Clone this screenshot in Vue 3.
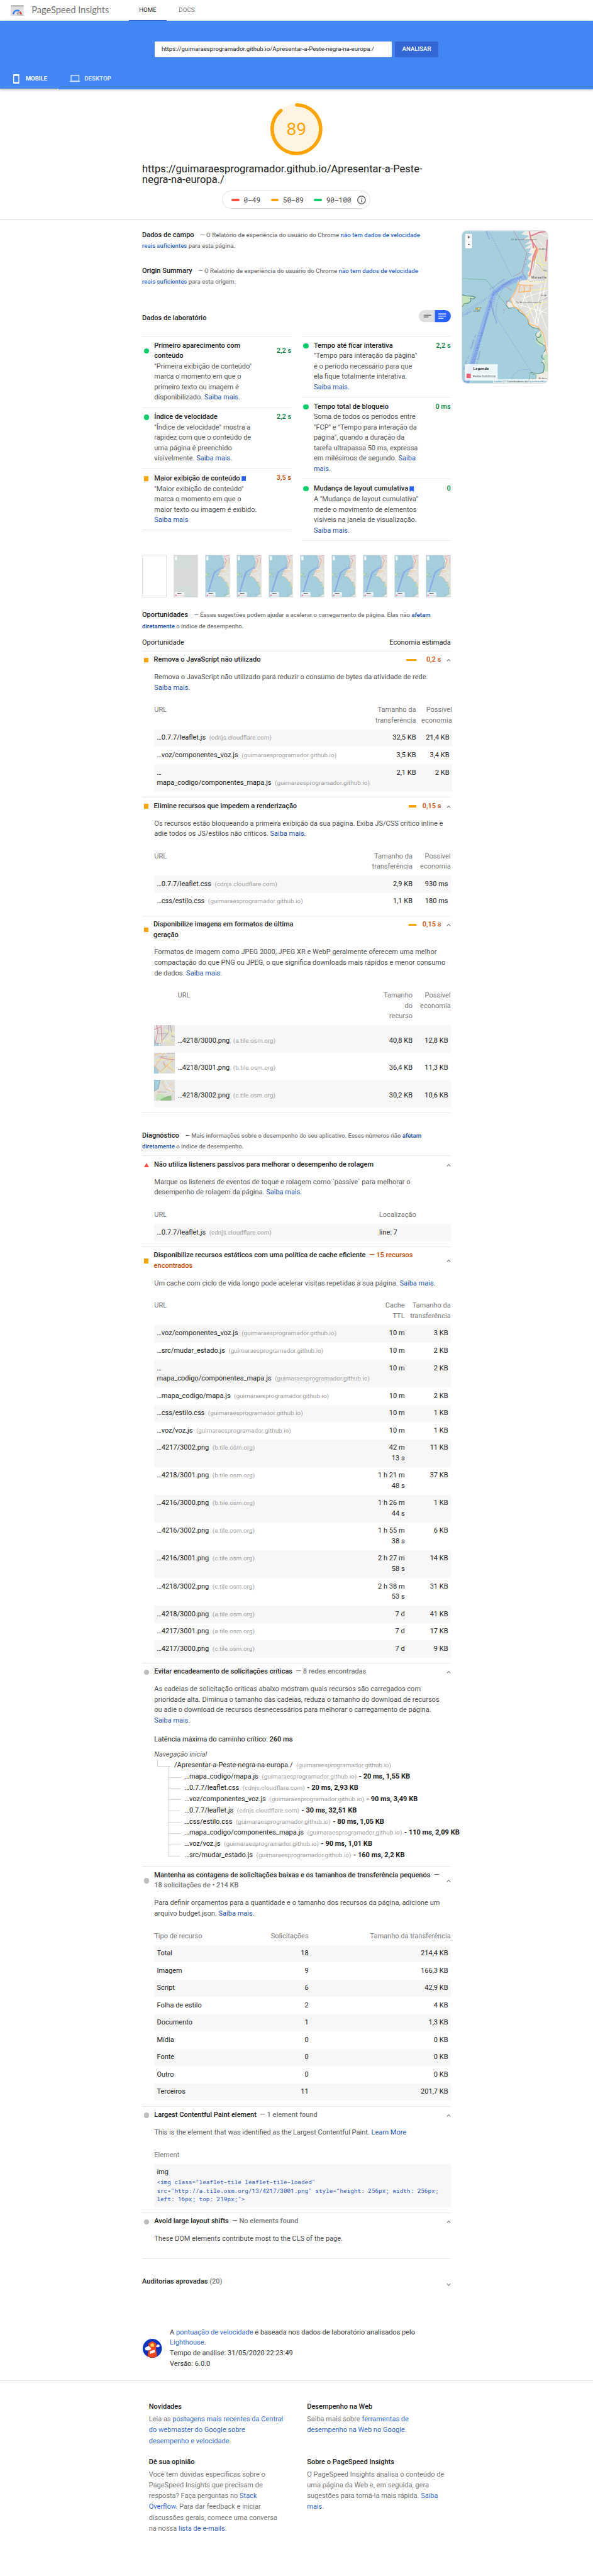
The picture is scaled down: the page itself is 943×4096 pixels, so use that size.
<script setup>
const gh = 'guimaraesprogramador.github.io'
const cdn = 'cdnjs.cloudflare.com'

const unusedJs = [
  { url: '…0.7.7/leaflet.js', host: cdn, size: '32,5 KB', save: '21,4 KB' },
  { url: '…voz/componentes_voz.js', host: gh, size: '3,5 KB', save: '3,4 KB' },
  { pre: '…', url: 'mapa_codigo/componentes_mapa.js', host: gh, size: '2,1 KB', save: '2 KB' },
]
const blocking = [
  { url: '…0.7.7/leaflet.css', host: cdn, size: '2,9 KB', save: '930 ms' },
  { url: '…css/estilo.css', host: gh, size: '1,1 KB', save: '180 ms' },
]
const images = [
  { url: '…4218/3000.png', host: 'a.tile.osm.org', size: '40,8 KB', save: '12,8 KB', tile: 'tile-a' },
  { url: '…4218/3001.png', host: 'b.tile.osm.org', size: '36,4 KB', save: '11,3 KB', tile: 'tile-b' },
  { url: '…4218/3002.png', host: 'c.tile.osm.org', size: '30,2 KB', save: '10,6 KB', tile: 'tile-c' },
]
const cache = [
  { url: '…voz/componentes_voz.js', host: gh, ttl: ['10 m'], size: '3 KB' },
  { url: '…src/mudar_estado.js', host: gh, ttl: ['10 m'], size: '2 KB' },
  { pre: '…', url: 'mapa_codigo/componentes_mapa.js', host: gh, ttl: ['10 m'], size: '2 KB' },
  { url: '…mapa_codigo/mapa.js', host: gh, ttl: ['10 m'], size: '2 KB' },
  { url: '…css/estilo.css', host: gh, ttl: ['10 m'], size: '1 KB' },
  { url: '…voz/voz.js', host: gh, ttl: ['10 m'], size: '1 KB' },
  { url: '…4217/3002.png', host: 'b.tile.osm.org', ttl: ['42 m', '13 s'], size: '11 KB' },
  { url: '…4218/3001.png', host: 'b.tile.osm.org', ttl: ['1 h 21 m', '48 s'], size: '37 KB' },
  { url: '…4216/3000.png', host: 'b.tile.osm.org', ttl: ['1 h 26 m', '44 s'], size: '1 KB' },
  { url: '…4216/3002.png', host: 'a.tile.osm.org', ttl: ['1 h 55 m', '38 s'], size: '6 KB' },
  { url: '…4216/3001.png', host: 'c.tile.osm.org', ttl: ['2 h 27 m', '58 s'], size: '14 KB' },
  { url: '…4218/3002.png', host: 'c.tile.osm.org', ttl: ['2 h 38 m', '53 s'], size: '31 KB' },
  { url: '…4218/3000.png', host: 'a.tile.osm.org', ttl: ['7 d'], size: '41 KB' },
  { url: '…4217/3001.png', host: 'a.tile.osm.org', ttl: ['7 d'], size: '17 KB' },
  { url: '…4217/3000.png', host: 'c.tile.osm.org', ttl: ['7 d'], size: '9 KB' },
]
const chain = [
  { url: '…mapa_codigo/mapa.js', host: gh, info: '20 ms, 1,55 KB' },
  { url: '…0.7.7/leaflet.css', host: cdn, info: '20 ms, 2,93 KB' },
  { url: '…voz/componentes_voz.js', host: gh, info: '90 ms, 3,49 KB' },
  { url: '…0.7.7/leaflet.js', host: cdn, info: '30 ms, 32,51 KB' },
  { url: '…css/estilo.css', host: gh, info: '80 ms, 1,05 KB' },
  { url: '…mapa_codigo/componentes_mapa.js', host: gh, info: '110 ms, 2,09 KB' },
  { url: '…voz/voz.js', host: gh, info: '90 ms, 1,01 KB' },
  { url: '…src/mudar_estado.js', host: gh, info: '160 ms, 2,2 KB' },
]
const resources = [
  ['Total', '18', '214,4 KB'],
  ['Imagem', '9', '166,3 KB'],
  ['Script', '6', '42,9 KB'],
  ['Folha de estilo', '2', '4 KB'],
  ['Documento', '1', '1,3 KB'],
  ['Mídia', '0', '0 KB'],
  ['Fonte', '0', '0 KB'],
  ['Outro', '0', '0 KB'],
  ['Terceiros', '11', '201,7 KB'],
]
</script>

<template>
  <div class="page">
    <svg class="defs" width="0" height="0" aria-hidden="true">
      <symbol id="map" viewBox="30 30 595 1056" preserveAspectRatio="none">
        <rect x="30" y="30" width="595" height="1056" fill="#a6cfde" />
        <path d="M625 30H500L466 32 440 54 498 64 470 80 446 92 508 92 462 124 512 118 458 154 508 150 486 178 514 190 484 222 510 240 482 270 504 294 484 322 492 346 480 368 455 372 430 365 412 378 420 400 400 440 375 480 362 500 380 535 352 520 332 540 350 565 378 568 405 560 425 590 455 610 485 640 492 680 520 700 555 705 575 722 545 740 540 765 560 790 550 810 590 815 615 850 590 890 600 915 580 940 600 970 595 1010 555 1020 510 1010 495 1045 488 1086H625Z" fill="#efece6" />
        <path d="M510 60L540 110 545 260 515 350 560 370 600 380 560 400 420 405 380 490 430 570 500 660 560 700 600 760 620 830 625 830V30H570Z" fill="#e1dfdc" />
        <path d="M540 800L575 720 600 800 585 835ZM596 890L625 880V1010L600 1000ZM415 560L440 575 425 592ZM30 480L70 476 120 486 105 500 84 496 90 514 78 530 30 552Z" fill="#c4e3bd" />
        <path d="M332 540L352 566 405 560 425 590 455 610 485 640 492 680 520 700 555 705 575 722M545 735c-20 40 35 45 30 10M545 770c0 40 50 40 60 60s0 30-10 40M590 890c-25 10 0 30 10 30M575 940c30 0 25 40 18 70l-40 12-45-12-22 76M30 472l22 8 40 2 30 6-14 14-22-4 4 18-20 14-26 6-14 18" fill="none" stroke="#5e8f80" stroke-width="5" />
        <path d="M122 562l40-2-14 20-26-4z" fill="#cfd8a0" stroke="#5e8f80" stroke-width="3" /><circle cx="134" cy="569" r="6" fill="#e08a3c" />
        <path d="M498 1014l46 14-4 30-44-6z" fill="#a6cfde" stroke="#7cb8a4" stroke-width="4" />
        <path d="M520 60v110M540 40l80 30M560 100l60 60M540 260l85 60M580 400l-50 290M610 380l-60 320M440 500l185-60M420 540l200 60M470 600l150-120M500 440l60 230M450 460l100 230M540 620l85-60M480 430l-40 130M560 560l60 160" fill="none" stroke="#fff" stroke-width="4" />
        <path d="M530 250l90 20M515 230l-20 120M550 160l40 150M570 150l30 90 25 5M430 455l195-28M470 380l140 5V310M625 520l-90 20-60 90M515 60l30 190" fill="none" stroke="#f3f0a2" stroke-width="6" />
        <path d="M410 400l35 5 80 5M430 405l-8 50 80-8V400M460 405v45M385 480l-20 20 20 50 60 40 45 55 5 30 60 20 35 45 15 60 10 80M430 370l-28 70-20 40" fill="none" stroke="#f5bd7d" stroke-width="7" />
        <path d="M495 30l12 60 40 60-25 60-22 130M620 90l-10 150M505 65l60-25 60-8M515 90l10 60" fill="none" stroke="#e08395" stroke-width="9" />
        <path d="M540 140l12 20-30 80M500 320l-5 25" fill="none" stroke="#f49b80" stroke-width="12" />
        <path d="M386 30L478 184 446 312 396 340M446 312l30 60M328 413l46 30M340 540l-4-25 12 5 18-28M315 570l8 8-5 8M310 600l8-6" fill="none" stroke="#b98ba4" stroke-width="4" />
        <path d="M30 362l166 6 136 172" fill="none" stroke="#79b5a6" stroke-width="4" />
        <path d="M470 350C390 370 310 405 255 455 200 590 150 760 60 1086" fill="none" stroke="#7e9bef" stroke-width="34" stroke-dasharray="5 3" opacity=".7" />
        <path d="M250 455C200 600 170 760 70 1086M230 520C180 690 130 880 40 1086M440 350C360 370 310 400 240 480" fill="none" stroke="#5f80ec" stroke-width="12" stroke-dasharray="6 5" opacity=".6" />
        <path d="M215 32L372 342 400 345M444 350L500 150 508 140M470 345l30 35 105-12M290 430c-45 90-55 160-40 190M320 410c-40 90-80 160-40 240L505 1000M30 600l150-95 190-140M60 595l250-170M360 1080c30-80 80-100 140-85" fill="none" stroke="#6d8de6" stroke-width="2.5" stroke-dasharray="9 6" />
        <path d="M540 200l-20 100M545 250l50 55 30 10M560 520l65-30" fill="none" stroke="#777" stroke-width="2" />
      </symbol>
      <symbol id="overlay" viewBox="30 30 595 1056" preserveAspectRatio="none">
        <rect x="49" y="49" width="50" height="102" rx="6" fill="#fff" />
        <path d="M70 72h10M75 67v10M70 122h10" stroke="#444" stroke-width="4" />
        <rect x="49" y="954" width="227" height="114" fill="#fff" fill-opacity=".8" />
        <rect x="60" y="1020" width="30" height="30" fill="#ee6172" />
        <path d="M107 986h106" stroke="#444" stroke-width="16" stroke-dasharray="14 4" />
        <path d="M103 1036h158" stroke="#e99" stroke-width="12" stroke-dasharray="10 4" />
        <path d="M250 1072h370" stroke="#9cd" stroke-width="12" stroke-dasharray="16 5" />
      </symbol>
      <symbol id="tile-a" viewBox="0 0 48 48">
        <path d="M0 0h48v48H0z" fill="#dedcd9" /><path d="M0 28l5 20H0zM8 44l14 4H0z" fill="#a6cfde" />
        <path d="M3 0l4 38M15 0l3 14-6 34M0 8l20-4M30 34l18-6M20 40L44 20M24 10l24 8" fill="none" stroke="#fff" />
        <path d="M5 0l4 12-6 30M16 0l2 40M0 10l16-6" fill="none" stroke="#dc8797" stroke-width="1.6" />
        <path d="M34 0v16L18 36M38 0l3 26 7 2" fill="none" stroke="#888" stroke-width="1" />
        <path d="M12 38l14-4 22 8M24 12l24 10M44 8L30 48" fill="none" stroke="#eeea9a" stroke-width="1.5" />
        <path d="M10 20h20M4 43h12" stroke="#777" stroke-dasharray="2 1" />
      </symbol>
      <symbol id="tile-b" viewBox="0 0 48 48">
        <path d="M0 0h48v48H0z" fill="#dedcd8" /><path d="M0 28l10 12v8H0z" fill="#a6cfde" />
        <path d="M0 6l18-6M0 28l14 16 30-28M4 30l20-30M20 24l28 20" fill="none" stroke="#f3bf88" stroke-width="1.6" />
        <path d="M16 48l20-20 4-28M0 18l48-6M30 20l18 26" fill="none" stroke="#eeea9a" stroke-width="1.6" />
        <path d="M14 10l16 4 18 2" fill="none" stroke="#dc8797" stroke-width="1.5" /><path d="M22 20l4 14M10 9h20M30 1h18" stroke="#888" stroke-dasharray="2 1" />
      </symbol>
      <symbol id="tile-c" viewBox="0 0 48 48">
        <path d="M0 0h48v48H0z" fill="#e0dfd9" /><path d="M0 0h14l-4 20-10 6z" fill="#a6cfde" stroke="#5e8f80" stroke-width=".8" />
        <path d="M6 34l12-2 10 6-4 10H4zM18 2h8l-4 5z" fill="#c4e3bd" /><path d="M16 44l14-6 10-2v12H14z" fill="#8fbd83" />
        <path d="M18 4l10 18 20 6M30 20L44 6M14 26l-6 10" fill="none" stroke="#f3c38c" stroke-width="1.4" /><path d="M28 16l12 8M24 0l18 30" fill="none" stroke="#fff" /><path d="M8 28h20" stroke="#777" stroke-dasharray="2 1" />
      </symbol>
      <symbol id="chevron" viewBox="0 0 10 8"><path d="M1 6.5l4-4.3 4 4.3" fill="none" stroke="#757575" stroke-width="1.5" /></symbol>
      <symbol id="bookmark" viewBox="0 0 11 13"><path d="M.3 1.3C.3.5.7.2 1.4.2h8.2c.7 0 1.1.3 1.1 1.1v11.5L5.5 10.600 .3 12.800z" fill="#2962ff" /></symbol>
    </svg>

    <header class="top">
      <svg class="logo" width="30" height="26" viewBox="0 0 30 26">
        <rect width="30" height="26" rx="1.5" fill="#e0e0e0" /><path d="M0 4V1.500Q0 0 1.500 0h27Q30 0 30 1.500V4z" fill="#bdbdbd" />
        <circle cx="2.700" cy="2.200" r=".7" fill="#fff" /><circle cx="5.500" cy="2.200" r=".7" fill="#fff" />
        <path d="M16 21l5-6 9 9v2H19z" fill="#c6c6c6" />
        <path d="M6 21.500a9 9 0 0 1 14-7.400" fill="none" stroke="#4285f4" stroke-width="4" />
        <path d="M21 15.600a8 8 0 0 1 3 5.900" fill="none" stroke="#db4437" stroke-width="4" />
        <path d="M20.500 12.500l-3 8.500a2 2 0 0 1-3.500-2z" fill="#9e9e9e" />
      </svg>
      <span class="brand">PageSpeed Insights</span>
      <nav class="nav"><a class="on">HOME</a><a>DOCS</a></nav>
    </header>

    <section class="hero">
      <div class="search">
        <div class="field">https://guimaraesprogramador.github.io/Apresentar-a-Peste-negra-na-europa./</div>
        <button class="go">ANALISAR</button>
      </div>
      <div class="devices">
        <span class="dev on">
          <svg class="i-mob" width="14" height="22" viewBox="0 0 14 22"><path fill="#fff" fill-rule="evenodd" d="M1.500 0h11Q14 0 14 1.500v19Q14 22 12.500 22h-11Q0 22 0 20.500v-19Q0 0 1.500 0zM2 4v14h10V4z" /></svg>MOBILE
        </span>
        <span class="dev">
          <svg class="i-desk" width="24" height="17" viewBox="0 0 24 17"><path fill="#fff" fill-rule="evenodd" d="M3.500 0h17Q22 0 22 1.500V14h2v2.500H0V14h2V1.500Q2 0 3.500 0zM4 2v11.500h16V2z" /></svg>DESKTOP
        </span>
      </div>
    </section>

    <section class="score">
      <div class="gauge">
        <svg width="120" height="120" viewBox="0 0 120 120">
          <circle cx="60" cy="60" r="58" fill="#fff4e2" />
          <circle class="arc" cx="60" cy="60" r="56" pathLength="1000" />
        </svg>
        <span>89</span>
      </div>
      <h1>https://guimaraesprogramador.github.io/Apresentar-a-Peste-<br />negra-na-europa./</h1>
      <div class="scale">
        <i class="red"></i><span>0–49</span><i class="amber"></i><span>50–89</span><i class="green"></i><span class="last">90–100</span>
        <svg width="20" height="20" viewBox="0 0 20 20"><circle cx="10" cy="10" r="9" fill="none" stroke="#616161" stroke-width="2" /><path d="M10 5v2M10 9v6" stroke="#616161" stroke-width="2" /></svg>
      </div>
    </section>

    <div class="report">
      <main class="main">
        <p class="lead field-data"><b>Dados de campo</b><span>— O Relatório de experiência do usuário do Chrome <a>não tem dados de velocidade<br />reais suficientes</a> para esta página.</span></p>
        <p class="lead origin"><b>Origin Summary</b><span>— O Relatório de experiência do usuário do Chrome <a>não tem dados de velocidade<br />reais suficientes</a> para esta origem.</span></p>
        <div class="lab-head">
          <b>Dados de laboratório</b>
          <svg width="74" height="28" viewBox="0 0 74 28"><path d="M37 0H14a14 14 0 0 0 0 28h23z" fill="#e0e0e0" /><path d="M37 0h23a14 14 0 0 1 0 28H37z" fill="#2962ff" /><path d="M11.500 12h17M11.500 16h10.500" stroke="#757575" stroke-width="2" /><path d="M45 9h18M45 14h18M45 19h12" stroke="#fff" stroke-width="2" /></svg>
        </div>
        <div class="metrics">
          <div class="mcol">
            <article class="metric">
              <i class="dot green tall"></i>
              <div><h3>Primeiro aparecimento com<br />conteúdo</h3><p>"Primeira exibição de conteúdo"<br />marca o momento em que o<br />primeiro texto ou imagem é<br />disponibilizado. <a>Saiba mais</a>.</p></div><em class="mid">2,2 s</em>
            </article>
            <article class="metric">
              <i class="dot green"></i>
              <div><h3>Índice de velocidade</h3><p>"Índice de velocidade" mostra a<br />rapidez com que o conteúdo de<br />uma página é preenchido<br />visivelmente. <a>Saiba mais</a>.</p></div><em>2,2 s</em>
            </article>
            <article class="metric end">
              <i class="sq"></i>
              <div><h3 class="mark">Maior exibição de conteúdo<svg width="11" height="13"><use href="#bookmark" /></svg></h3><p>"Maior exibição de conteúdo"<br />marca o momento em que o<br />maior texto ou imagem é exibido.<br /><a>Saiba mais</a></p></div><em class="warn">3,5 s</em>
            </article>
          </div>
          <div class="mcol">
            <article class="metric">
              <i class="dot green"></i>
              <div><h3>Tempo até ficar interativa</h3><p>"Tempo para interação da página"<br />é o período necessário para que<br />ela fique totalmente interativa.<br /><a>Saiba mais</a>.</p></div><em>2,2 s</em>
            </article>
            <article class="metric">
              <i class="dot green"></i>
              <div><h3>Tempo total de bloqueio</h3><p>Soma de todos os períodos entre<br />"FCP" e "Tempo para interação da<br />página", quando a duração da<br />tarefa ultrapassa 50 ms, expressa<br />em milésimos de segundo. <a>Saiba<br />mais</a>.</p></div><em>0 ms</em>
            </article>
            <article class="metric end">
              <i class="dot green"></i>
              <div><h3 class="mark">Mudança de layout cumulativa<svg width="11" height="13"><use href="#bookmark" /></svg></h3><p>A "Mudança de layout cumulativa"<br />mede o movimento de elementos<br />visíveis na janela de visualização.<br /><a>Saiba mais</a>.</p></div><em>0</em>
            </article>
          </div>
        </div>

        <div class="film">
          <div v-for="n in 10" :key="n" class="frame">
            <svg v-if="n > 1" width="55" height="97">
              <rect v-if="n === 2" width="55" height="97" fill="#dadada" />
              <path v-if="n === 2" d="M0 0h41v30q-20 5-41 2zM4 73h37v24H4z" fill="#d3dbdb" />
              <use v-else href="#map" width="55" height="97" />
              <use href="#overlay" width="55" height="97" />
            </svg>
          </div>
        </div>

        <section class="opps">
          <p class="lead"><b>Oportunidades</b><span>— Essas sugestões podem ajudar a acelerar o carregamento de página. Elas não <a class="dk">afetam<br />diretamente</a> o índice de desempenho.</span></p>
          <div class="cols"><span>Oportunidade</span><span>Economia estimada</span></div>

          <article class="audit first">
            <header><i class="sq"></i><h3 class="o">Remova o JavaScript não utilizado</h3><u class="bar b23"></u><em class="warn">0,2 s</em><svg class="chev" width="10" height="8"><use href="#chevron" /></svg></header>
            <p>Remova o JavaScript não utilizado para reduzir o consumo de bytes da atividade de rede.<br /><a>Saiba mais</a>.</p>
            <div class="table wide">
              <div class="tr th"><span class="c1">URL</span><span class="c2">Tamanho da<br />transferência</span><span class="c3">Possível<br />economia</span></div>
              <div v-for="r in unusedJs" :key="r.url" class="tr td"><span class="c1"><template v-if="r.pre">{{ r.pre }}<br /></template>{{ r.url }}<small>({{ r.host }})</small></span><span class="c2">{{ r.size }}</span><span class="c3">{{ r.save }}</span></div>
            </div>
          </article>

          <article class="audit second">
            <header><i class="sq"></i><h3 class="o">Elimine recursos que impedem a renderização</h3><u class="bar b17"></u><em class="warn">0,15 s</em><svg class="chev" width="10" height="8"><use href="#chevron" /></svg></header>
            <p>Os recursos estão bloqueando a primeira exibição da sua página. Exiba JS/CSS crítico inline e<br />adie todos os JS/estilos não críticos. <a>Saiba mais</a>.</p>
            <div class="table">
              <div class="tr th"><span class="c1">URL</span><span class="c2">Tamanho da<br />transferência</span><span class="c3">Possível<br />economia</span></div>
              <div v-for="r in blocking" :key="r.url" class="tr td"><span class="c1">{{ r.url }}<small>({{ r.host }})</small></span><span class="c2">{{ r.size }}</span><span class="c3">{{ r.save }}</span></div>
            </div>
          </article>

          <article class="audit third">
            <header class="top-aligned"><i class="sq small"></i><h3 class="o">Disponibilize imagens em formatos de última<br />geração</h3><u class="bar b17"></u><em class="warn">0,15 s</em><svg class="chev" width="10" height="8"><use href="#chevron" /></svg></header>
            <p>Formatos de imagem como JPEG 2000, JPEG XR e WebP geralmente oferecem uma melhor<br />compactação do que PNG ou JPEG, o que significa downloads mais rápidos e menor consumo<br />de dados. <a>Saiba mais</a>.</p>
            <div class="table imgs">
              <div class="tr th"><span class="c1">URL</span><span class="c2">Tamanho<br />do<br />recurso</span><span class="c3">Possível<br />economia</span></div>
              <div v-for="r in images" :key="r.url" class="tr td"><svg width="48" height="48"><use :href="'#' + r.tile" /></svg><span class="c1">{{ r.url }}<small>({{ r.host }})</small></span><span class="c2">{{ r.size }}</span><span class="c3">{{ r.save }}</span></div>
            </div>
          </article>
        </section>

        <section class="diag">
          <p class="lead"><b>Diagnóstico</b><span>— Mais informações sobre o desempenho do seu aplicativo. Esses números não <a class="dk">afetam<br />diretamente</a> o índice de desempenho.</span></p>

          <article class="audit listeners">
            <header><i class="tri"></i><h3>Não utiliza listeners passivos para melhorar o desempenho de rolagem</h3><svg class="chev" width="10" height="8"><use href="#chevron" /></svg></header>
            <p>Marque os listeners de eventos de toque e rolagem como `passive` para melhorar o<br />desempenho de rolagem da página. <a>Saiba mais</a>.</p>
            <div class="table loc">
              <div class="tr th"><span class="c1">URL</span><span class="c2">Localização</span></div>
              <div class="tr td"><span class="c1">…0.7.7/leaflet.js<small>({{ cdn }})</small></span><span class="c2">line: 7</span></div>
            </div>
          </article>

          <article class="audit cache">
            <header><i class="sq"></i><h3 class="o">Disponibilize recursos estáticos com uma política de cache eficiente <q class="warn">— 15 recursos<br />encontrados</q></h3><svg class="chev" width="10" height="8"><use href="#chevron" /></svg></header>
            <p>Um cache com ciclo de vida longo pode acelerar visitas repetidas à sua página. <a>Saiba mais</a>.</p>
            <div class="table ttl">
              <div class="tr th"><span class="c1">URL</span><span class="c2">Cache<br />TTL</span><span class="c3">Tamanho da<br />transferência</span></div>
              <div v-for="r in cache" :key="r.url" class="tr td"><span class="c1"><template v-if="r.pre">{{ r.pre }}<br /></template>{{ r.url }}<small>({{ r.host }})</small></span><span class="c2"><template v-for="(t, i) in r.ttl" :key="t"><br v-if="i" />{{ t }}</template></span><span class="c3">{{ r.size }}</span></div>
            </div>
          </article>

          <article class="audit chains">
            <header><i class="dot"></i><h3>Evitar encadeamento de solicitações críticas <q>— 8 redes encontradas</q></h3><svg class="chev" width="10" height="8"><use href="#chevron" /></svg></header>
            <p>As cadeias de solicitação críticas abaixo mostram quais recursos são carregados com<br />prioridade alta. Diminua o tamanho das cadeias, reduza o tamanho do download de recursos<br />ou adie o download de recursos desnecessários para melhorar o carregamento de página.<br /><a>Saiba mais</a>.</p>
            <div class="latency">Latência máxima do caminho crítico: <b>260 ms</b></div>
            <div class="navi">Navegação inicial</div>
            <div class="root">/Apresentar-a-Peste-negra-na-europa./<small>({{ gh }})</small></div>
            <div v-for="c in chain" :key="c.url" class="leaf">{{ c.url }}<small>({{ c.host }})</small> <b>- {{ c.info }}</b></div>
          </article>

          <article class="audit budget">
            <header><i class="dot"></i><h3>Mantenha as contagens de solicitações baixas e os tamanhos de transferência pequenos <q>—<br />18 solicitações de • 214 KB</q></h3><svg class="chev" width="10" height="8"><use href="#chevron" /></svg></header>
            <p>Para definir orçamentos para a quantidade e o tamanho dos recursos da página, adicione um<br />arquivo budget.json. <a>Saiba mais</a>.</p>
            <div class="table res">
              <div class="tr th"><span class="c1">Tipo de recurso</span><span class="c2">Solicitações</span><span class="c3">Tamanho da transferência</span></div>
              <div v-for="r in resources" :key="r[0]" class="tr td"><span class="c1">{{ r[0] }}</span><span class="c2">{{ r[1] }}</span><span class="c3">{{ r[2] }}</span></div>
            </div>
          </article>

          <article class="audit lcp">
            <header><i class="dot"></i><h3>Largest Contentful Paint element <q>— 1 element found</q></h3><svg class="chev" width="10" height="8"><use href="#chevron" /></svg></header>
            <p>This is the element that was identified as the Largest Contentful Paint. <a>Learn More</a></p>
            <div class="table">
              <div class="tr th"><span class="c1">Element</span></div>
              <div class="tr td code"><span>img</span><code>&lt;img class="leaflet-tile leaflet-tile-loaded"<br />src="http://a.tile.osm.org/13/4217/3001.png" style="height: 256px; width: 256px;<br />left: 16px; top: 219px;"&gt;</code></div>
            </div>
          </article>

          <article class="audit shifts">
            <header><i class="dot"></i><h3>Avoid large layout shifts <q>— No elements found</q></h3><svg class="chev" width="10" height="8"><use href="#chevron" /></svg></header>
            <p>These DOM elements contribute most to the CLS of the page.</p>
          </article>
        </section>

        <div class="passed"><b>Auditorias aprovadas <span>(20)</span></b><svg class="chev down" width="10" height="8"><use href="#chevron" /></svg></div>

        <div class="lighthouse">
          <svg width="44" height="44" viewBox="0 0 44 44">
            <circle cx="22" cy="22" r="22" fill="#0535c1" />
            <path d="M32 15c1-4 8-2 7 2-1 3-7 3-9 1z" fill="#e8eaf6" />
            <path d="M22 5l9 6v8h-1l3 21q-11 7-22 0l3-21h-1v-8z" fill="#f4461c" />
            <path d="M18 12l4-2 4 2v6h-8z" fill="#ffd54f" /><path d="M17 28l11-3v6l-12 4z" fill="#fff" />
            <path d="M5 22c1-4 5-3 6-5 4-1 6 2 6 3 4 1 2 5 0 5-4 3-12 2-12-3z" fill="#fff" />
          </svg>
          <p>A <a>pontuação de velocidade</a> é baseada nos dados de laboratório analisados pelo<br /><a>Lighthouse</a>.<br />Tempo de análise: 31/05/2020 22:23:49<br />Versão: 6.0.0</p>
        </div>
      </main>

      <aside class="shot">
        <svg width="198" height="352" viewBox="0 0 595 1056">
          <use href="#map" width="595" height="1056" />
          <g transform="translate(-30 -30)" class="lab">
            <text x="368" y="95" textLength="178">2e Arrondissement</text>
            <text x="560" y="158">3e Arro</text><text x="590" y="307">1er</text>
            <text x="509" y="360" class="city" textLength="105">Marseille</text>
            <text x="576" y="483">6e Ar</text><text x="402" y="532" textLength="176">7e Arrondissement</text>
            <text x="560" y="1060">8e Arro</text><text x="108" y="592" class="sm">Île d'If</text>
            <g class="sea">
              <text transform="translate(192 34) rotate(68)">Estaque</text>
              <text transform="translate(225 440) rotate(-36)" textLength="125">Frioul-If Express</text>
              <text transform="translate(305 415) rotate(-22)">If Express</text>
              <text transform="translate(32 624) rotate(-28)">If Express</text>
              <text transform="translate(274 668) rotate(-107)" textLength="160">Navette Pointe Rouge</text>
              <text transform="translate(94 852) rotate(-72)">Marseille - نابل</text>
              <text transform="translate(128 980) rotate(-75)">Alger - Marseille</text>
              <text transform="translate(44 995) rotate(-72)">Marseille - نابل</text>
            </g>
            <rect x="49" y="48" width="51" height="104" rx="6" fill="#fff" stroke="#9bbcc8" stroke-width="3" />
            <path d="M49 100h51" stroke="#ccc" stroke-width="2" /><path d="M67 73h17M75.500 65v17M69 123h13" stroke="#222" stroke-width="4" />
            <rect x="48" y="954" width="228" height="114" fill="#fff" fill-opacity=".8" />
            <text x="107" y="993" class="leg" textLength="107">Legenda</text>
            <rect x="60" y="1020" width="30" height="30" fill="#ee6172" />
            <text x="103" y="1044" class="pb" textLength="158">Peste bubônica</text>
            <rect x="244" y="1058" width="381" height="28" fill="#fff" fill-opacity=".7" />
            <text x="251" y="1078" class="att" textLength="364"><tspan fill="#0078a8">Leaflet</tspan> | © Contribuidores do <tspan fill="#0078a8">OpenStreetMap</tspan></text>
          </g>
        </svg>
      </aside>
    </div>

    <footer class="foot">
      <div><h4>Novidades</h4><p>Leia as <a>postagens mais recentes da Central<br />do webmaster do Google sobre<br />desempenho e velocidade</a>.</p></div>
      <div><h4>Desempenho na Web</h4><p>Saiba mais sobre <a>ferramentas de<br />desempenho na Web no Google</a>.</p></div>
      <div><h4>Dê sua opinião</h4><p>Você tem dúvidas específicas sobre o<br />PageSpeed Insights que precisam de<br />resposta? Faça perguntas no <a>Stack<br />Overflow</a>. Para dar feedback e iniciar<br />discussões gerais, comece uma conversa<br />na nossa <a>lista de e-mails</a>.</p></div>
      <div><h4>Sobre o PageSpeed Insights</h4><p>O PageSpeed Insights analisa o conteúdo de<br />uma página da Web e, em seguida, gera<br />sugestões para torná-la mais rápida. <a>Saiba<br />mais</a>.</p></div>
    </footer>
  </div>
</template>

<style>
html, body { background: #fff; overflow: hidden; }
</style>

<style scoped>
.page { zoom: .6891; width: 1369px; height: 5944px; overflow: hidden; font: 16px/24px Roboto, "Liberation Sans", sans-serif; color: #212121; white-space: nowrap; box-sizing: border-box; }
.page * { box-sizing: border-box; }
.defs { position: absolute; }
h1, h3, h4, p { margin: 0; font-weight: 400; font-size: inherit; }
svg { display: block; flex: none; }
a { color: #1c4fb3; }
b, h3, h4 { font-weight: 500; }
em, i, u { font-style: normal; text-decoration: none; }

.top { display: flex; height: 48px; align-items: center; padding-left: 25px; }
.brand { margin-left: 18px; width: 206px; font-family: Lato, Roboto, sans-serif; font-size: 21.2px; color: #757575; }
.nav { display: flex; align-self: stretch; margin-left: 18px; font-size: 14px; letter-spacing: .1px; }
.nav a { width: 88px; text-align: center; line-height: 46px; color: #757575; }
.nav a + a { margin-left: 2px; }
.nav .on { color: #212121; border-bottom: 2px solid #3367d6; }

.hero { height: 158px; background: #4285f4; box-shadow: 0 2px 6px rgba(0, 0, 0, .4); display: flex; flex-direction: column; justify-content: space-between; padding-top: 48px; position: relative; }
.search { display: flex; gap: 8px; padding-left: 357px; height: 36px; }
.field { width: 547px; background: #fff; border-radius: 2px; padding-left: 16px; font-size: 14px; line-height: 35px; letter-spacing: .04px; }
.go { width: 99px; padding: 0; border: 0; border-radius: 2px; background: #3367d6; color: #fff; font: 500 14px/35px Roboto, sans-serif; }
.devices { display: flex; color: #fff; font-size: 14px; font-weight: 700; }
.dev { display: flex; align-items: center; height: 47px; padding-bottom: 2px; opacity: .8; }
.dev.on { width: 135px; opacity: 1; border-bottom: 2px solid #fff; padding: 0 0 0 31px; }
.i-mob { margin-right: 14px; }
.i-desk { margin: 0 10px 0 26px; }

.score { height: 301px; border-bottom: 1px solid #e0e0e0; padding: 32px 0 0 328px; }
.gauge { position: relative; width: 120px; height: 120px; margin-left: 296px; }
.gauge span { position: absolute; inset: 0; text-align: center; font-size: 41px; line-height: 122px; color: #ffa400; }
.arc { fill: none; stroke: #ffa400; stroke-width: 8; stroke-linecap: round; stroke-dasharray: 886 1000; transform: rotate(-89deg); transform-origin: 60px 60px; }
.score h1 { margin-top: 19px; font-size: 24px; line-height: 25.5px; }
.scale { margin: 12px 0 0 185px; width: 342px; height: 42px; border: 1px solid #e0e0e0; border-radius: 21px; display: flex; align-items: center; padding-left: 20px; font: 16px "Roboto Mono", "DejaVu Sans Mono", monospace; font-weight: 400; color: #424242; }
.scale i { width: 18px; height: 6px; border-radius: 3px; margin-right: 10px; }
.scale span { margin-right: 24px; }
.scale .last { margin-right: 14px; }
.red { background: #ff4e42; } .amber { background: #ffa400; } .green { background: #0cce6b; }

.report { display: flex; padding-left: 328px; gap: 25px; height: 4987px; border-bottom: 1px solid #e0e0e0; }
.main { width: 712px; }
.shot { margin-top: 24px; width: 200px; height: 354px; border: 1px solid #e0e0e0; border-radius: 12px; overflow: hidden; }
.lab { font: 17px "Noto Sans", sans-serif; fill: #555; }
.lab .city { font-size: 22px; fill: #444; }
.lab .sm { font-size: 15px; }
.sea { fill: #6b80d6; font-size: 16px; }
.leg { font: 700 24px "Liberation Sans", sans-serif; fill: #111; }
.pb { font: 23px "Liberation Sans", sans-serif; fill: #666; }
.att { font: 17px "Liberation Sans", sans-serif; fill: #333; }

.lead { line-height: 25px; }
.lead b { margin-right: 14px; }
.lead span { font-size: 14px; font-weight: 500; color: #757575; letter-spacing: -.03px; }
.lead a { color: #3367d6; }
.lead a.dk { color: #0d47a1; }
.field-data { margin-top: 23px; }
.origin { margin-top: 32px; }
.field-data span, .origin span { letter-spacing: .03px; }
.lab-head { margin-top: 54px; display: flex; justify-content: space-between; height: 59px; }
.lab-head b { padding-top: 6px; }
.metrics { display: flex; gap: 24px; }
.mcol { width: 344px; }
.metric { border-top: 1px solid #e6e6e6; padding: 9.55px 0 10px; display: flex; }
.metric.end { border-bottom: 1px solid #e6e6e6; padding-bottom: 9.55px; }
.metric > div { width: 250px; flex: 1; }
.metric p, .audit > p { color: #4f4f4f; }
.metric em { color: #018642; font-weight: 500; }
.metric em.mid { padding-top: 12px; }
.metric em.warn, .warn { color: #d04900; font-weight: 500; }
.mark { display: flex; height: 25px; align-items: center; }
.mark svg { margin-left: 3px; }
.dot { width: 12px; height: 12px; border-radius: 50%; margin: 6px 12px 0 4px; flex: none; }
.dot.tall { margin-top: 18px; }
.sq { width: 11px; height: 11px; background: #ffa400; margin: 7px 13px 0 4px; flex: none; }

.film { margin-top: 32px; display: flex; justify-content: space-between; }
.frame { width: 57px; height: 99.5px; border: 1px solid #e4e4e4; overflow: hidden; }

.opps { padding-top: 27.5px; }
.cols { display: flex; justify-content: space-between; margin-top: 14px; height: 31px; }
.audit { border-top: 1px solid #e6e6e6; padding-top: 7.7px; }
.audit header { display: flex; align-items: center; }
.audit header .sq, .audit header .dot { margin-top: 0; margin-bottom: 0; }
.audit header .dot { background: #bdbdbd; }
.audit h3 { flex: 1; }
.audit h3.o { margin-left: -1px; }
.sq.small { width: 10px; }
.top-aligned .bar, .top-aligned em, .top-aligned .chev { margin-bottom: 24px; }
.bar { height: 5px; background: #ffa400; margin-right: 15px; }
.b23 { width: 23px; margin-right: 24px; }
.b17 { width: 17px; }
.chev { margin: 1px 0 0 12px; }
.tri { border: 6px solid transparent; border-top: 0; border-bottom: 11px solid #ff4e42; margin: 1px 12px 0 4px; }
.audit > p { margin: 16.5px 0 0 28px; }
.table { margin: 28px 0 0 28px; width: 684px; }
.table.wide { width: 687px; }
.tr { display: grid; grid-template-columns: minmax(0, 1fr) 150px 88px; }
.th { color: #757575; padding-bottom: 8px; }
.td { padding: 8px 0; }
.td:nth-child(even) { background: #f7f7f7; }
.c2, .c3 { text-align: right; }
.td .c3 { padding-right: 6px; }
.td .c1 { padding-left: 6px; }
.wide .tr { grid-template-columns: minmax(0, 1fr) 100px 83px; }
small { font-size: 14.4px; color: #9e9e9e; margin-left: 8px; }
q { quotes: none; color: #757575; margin-left: 4px; }
.cache q { color: #d04900; }
.second, .third { margin-top: 12px; }
.imgs .tr { grid-template-columns: 54px minmax(0, 1fr) 100px 88px; }
.imgs .th .c1 { grid-column: 2; }
.imgs .td { padding: 0 0 15px; height: 63px; align-items: end; }
.imgs .td svg { align-self: start; }
.imgs .td span { line-height: 24px; margin-bottom: -6px; padding-bottom: 6px; }
.imgs .td .c1 { padding-left: 0; }
.third { border-bottom: 1px solid #e6e6e6; padding-bottom: 12px; }

.diag { padding-top: 39.4px; }
.diag .lead { line-height: 25px; }
.listeners { margin-top: 8.5px; }
.diag .audit { padding-top: 8px; }
.diag .audit + .audit { margin-top: 12px; }
.diag .audit > p { margin-top: 16.3px; }
.loc .tr { grid-template-columns: 519px 1fr; }
.loc .c2 { text-align: left; }
.ttl .tr { grid-template-columns: minmax(0, 1fr) 80px 106px; }
.latency { margin: 20px 0 0 28px; }
.navi { margin: 10px 0 0 28px; font-style: italic; color: #555; }
.root, .leaf { position: relative; line-height: 26px; height: 26px; margin-left: 74px; }
.leaf { margin-left: 98px; }
.leaf b { font-weight: 700; margin-left: 1px; }
.root::before { content: ""; position: absolute; left: -39px; top: 0; width: 29px; height: 14px; border: solid #d5d5d5; border-width: 0 0 2px 2px; }
.leaf::before { content: ""; position: absolute; left: -39px; top: -12px; width: 28px; height: 26px; border: solid #d5d5d5; border-width: 0 0 2px 2px; }
.res .tr { grid-template-columns: minmax(0, 1fr) 156px 328px; }
.code { display: block; }
.code span { padding-left: 6px; display: block; }
.code code { display: block; padding-left: 6px; font: 13.55px/20px "Roboto Mono", "DejaVu Sans Mono", monospace; color: #2a56c6; }
.shifts { border-bottom: 1px solid #e6e6e6; padding-bottom: 32.5px; }
.passed { margin-top: 40px; display: flex; justify-content: space-between; }
.passed span { color: #757575; }
.down { margin-top: 15px; transform: rotate(180deg); }
.lighthouse { display: flex; align-items: center; margin-top: 94px; padding-left: 2px; }
.lighthouse p { margin-left: 18px; color: #333; }
.lighthouse a, .foot a { color: #3367d6; }
.foot { display: grid; grid-template-columns: 365px 365px; padding: 47px 0 0 343.5px; row-gap: 23px; }
.foot h4 { line-height: 27px; margin-bottom: 2px; }
.foot p { color: #757575; line-height: 25px; }
</style>
